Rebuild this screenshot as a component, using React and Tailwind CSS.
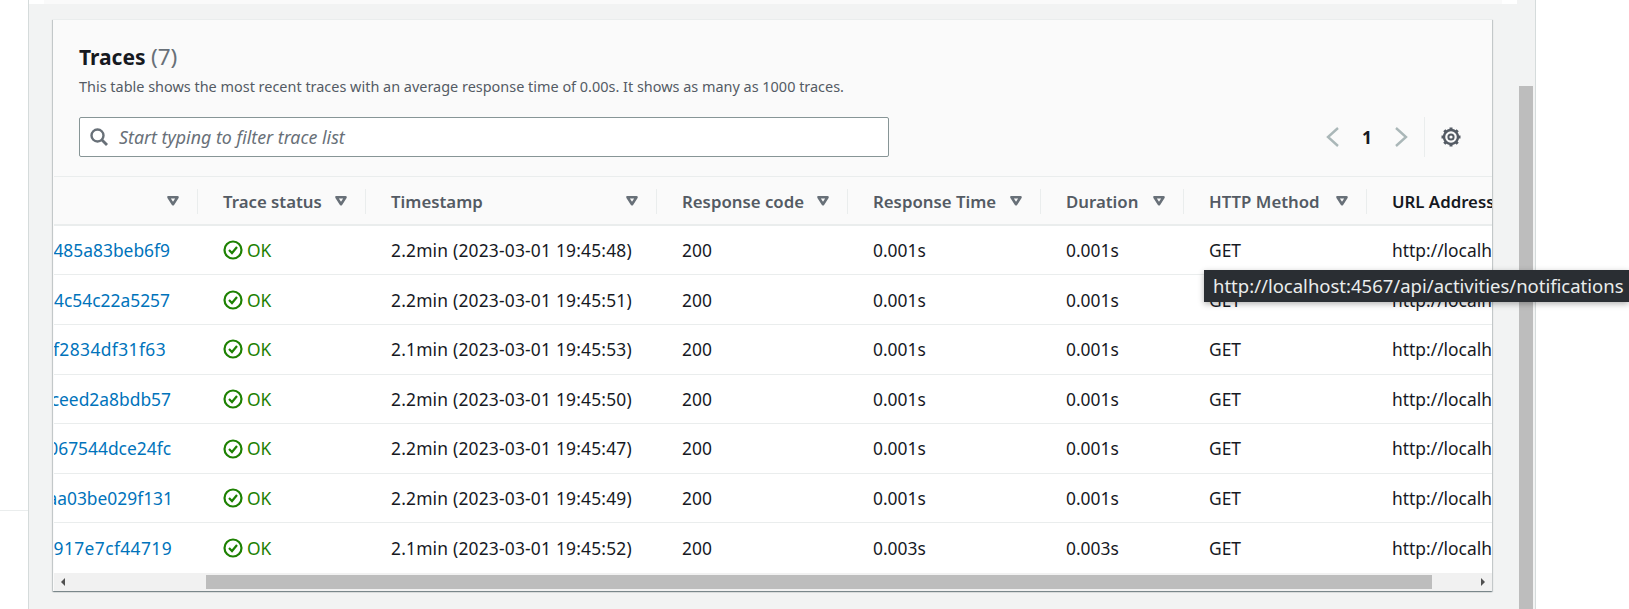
import { Fragment } from 'react';

const COLS = 'grid grid-cols-[144px_168px_291px_191px_193px_143px_183px_125px]';

const HEADERS = [
  { label: '', sort: true },
  { label: 'Trace status', sort: true },
  { label: 'Timestamp', sort: true },
  { label: 'Response code', sort: true },
  { label: 'Response Time', sort: true },
  { label: 'Duration', sort: true },
  { label: 'HTTP Method', sort: true },
];

const ROWS = [
  { id: '701c485a83beb6f9', pad: 'pr-[28px]', age: '2.2min (2023-03-01 19:45:48)', rt: '0.001s' },
  { id: '93a24c54c22a5257', pad: 'pr-[28px]', age: '2.2min (2023-03-01 19:45:51)', rt: '0.001s' },
  { id: 'f2834df31f63', pad: 'pr-[32px] tracking-[0.4px]', age: '2.1min (2023-03-01 19:45:53)', rt: '0.001s' },
  { id: '467cceed2a8bdb57', pad: 'pr-[27px]', age: '2.2min (2023-03-01 19:45:50)', rt: '0.001s' },
  { id: 'c2b9067544dce24fc', pad: 'pr-[27px]', age: '2.2min (2023-03-01 19:45:47)', rt: '0.001s' },
  { id: '284aa03be029f131', pad: 'pr-[25px]', age: '2.2min (2023-03-01 19:45:49)', rt: '0.001s' },
  { id: '917e7cf44719', pad: 'pr-[26px] tracking-[0.4px]', age: '2.1min (2023-03-01 19:45:52)', rt: '0.003s' },
];

function SortIcon() {
  return (
    <svg width="14" height="12" viewBox="0 0 14 12" className="shrink-0">
      <path d="M2.500 2.200h9l-4.500 7z" fill="none" stroke="#687078" strokeWidth="2.600" strokeLinejoin="round" />
    </svg>
  );
}

function OkIcon() {
  return (
    <svg width="20" height="20" viewBox="0 0 20 20" className="shrink-0">
      <circle cx="10" cy="10" r="8.500" fill="none" stroke="#1d8102" strokeWidth="2.200" />
      <path d="M6 10l3 3 5-6" fill="none" stroke="#1d8102" strokeWidth="2.200" />
    </svg>
  );
}

function SearchIcon() {
  return (
    <svg width="18" height="18" viewBox="0 0 18 18" className="shrink-0">
      <circle cx="7.500" cy="7.500" r="6" fill="none" stroke="#687078" strokeWidth="2.400" />
      <path d="M12 12l5 5" fill="none" stroke="#687078" strokeWidth="2.800" />
    </svg>
  );
}

function GearIcon() {
  return (
    <svg width="20" height="20" viewBox="0 0 20 20" className="shrink-0">
      <circle cx="10" cy="10" r="7" fill="none" stroke="#545b64" strokeWidth="2.400" />
      <circle cx="10" cy="10" r="2.600" fill="none" stroke="#545b64" strokeWidth="2" />
      <path
        d="M10 .5v3M10 16.500v3M.5 10h3M16.500 10h3M3.300 3.300l2.100 2.100M14.600 14.600l2.100 2.100M3.300 16.700l2.100-2.100M14.600 5.400l2.100-2.100"
        fill="none"
        stroke="#545b64"
        strokeWidth="3"
      />
    </svg>
  );
}

function ChevronIcon({ right }) {
  return (
    <svg width="14" height="22" viewBox="0 0 14 22">
      <path d={right ? 'M2 2l10 9-10 9' : 'M12 2L2 11l10 9'} fill="none" stroke="#aab7b8" strokeWidth="2.400" />
    </svg>
  );
}

function HeaderCell({ label, sort, first }) {
  return (
    <div className="flex h-full items-center pt-[2px]">
      <div className={`flex h-[25px] w-full items-center justify-between pr-[17px] border-r border-[#eaeded] ${first ? 'pl-0' : 'pl-[25px]'}`}>
        <span className="font-semibold text-[#545b64]">{label}</span>
        {sort && <SortIcon />}
      </div>
    </div>
  );
}

function Row({ row, last }) {
  return (
    <div className={`${COLS} h-[49.600px] items-center ${last ? '' : 'border-b border-[#eaeded]'}`}>
      <div className={`flex justify-end overflow-hidden whitespace-nowrap text-[#0073bb] ${row.pad}`}>{row.id}</div>
      <div className="flex items-center gap-[4px] pl-[25px] text-[#1d8102]">
        <OkIcon />
        OK
      </div>
      <div className="pl-[25px] tracking-[0.2px]">{row.age}</div>
      <div className="pl-[25px]">200</div>
      <div className="pl-[25px]">{row.rt}</div>
      <div className="pl-[25px]">{row.rt}</div>
      <div className="pl-[25px]">GET</div>
      <div className="overflow-hidden whitespace-nowrap pl-[25px]">http://localhost:4567/api</div>
    </div>
  );
}

export default function App() {
  return (
    <div className="relative flex h-[609px] w-[1629px] overflow-hidden bg-white font-['Noto_Sans',sans-serif] text-[17.400px] text-[#16191f]">
      {/* left gutter */}
      <div className="h-full w-[28px] pt-[510px]">
        <div className="border-t border-[#eaeded]" />
      </div>

      <div className="flex h-full w-[1508px] border-x border-[#d5dbdb] bg-[#f2f3f3]">
        <main className="w-[1490px]">
          <div className="h-[4px] w-[1488px] bg-white pl-[15px] pr-[15px]">
            <div className="h-full bg-[#fafafa]" />
          </div>

          {/* traces card */}
          <section className="ml-[24px] mt-[15px] flex h-[572px] w-[1439px] flex-col overflow-hidden border-t border-[#eaeded] bg-[#fafafa] pl-px shadow-[0_1px_1px_0_rgba(0,28,36,0.3),1px_1px_1px_0_rgba(0,28,36,0.15),-1px_1px_1px_0_rgba(0,28,36,0.15)]">
            <div className="h-[157px] border-b border-[#eaeded] pl-[25px] pr-[31px] pt-[22px]">
              <h2 className="text-[21px] leading-[30px] font-bold">
                Traces <span className="text-[22.500px] font-normal text-[#687078]">(7)</span>
              </h2>
              <p className="mt-[5px] text-[14.450px] leading-[20px] text-[#545b64]">
                This table shows the most recent traces with an average response time of 0.00s. It shows as many as 1000 traces.
              </p>
              <div className="mt-[20px] flex items-center justify-between">
                <div className="flex h-[40px] w-[810px] items-center gap-[11px] rounded-[2px] border border-[#879596] bg-white pl-[10px]">
                  <SearchIcon />
                  <span className="text-[17.800px] italic text-[#687078]">Start typing to filter trace list</span>
                </div>
                <div className="flex h-[40px] items-center">
                  <ChevronIcon />
                  <span className="mx-[22px] font-bold">1</span>
                  <ChevronIcon right />
                  <div className="ml-[16px] mr-[16px] h-full border-l border-[#eaeded]" />
                  <GearIcon />
                </div>
              </div>
            </div>

            <div className={`${COLS} h-[49px] border-b-2 border-[#eaeded] text-[16.800px]`}>
              {HEADERS.map((h, i) => (
                <Fragment key={i}>
                  <HeaderCell label={h.label} sort={h.sort} first={i === 0} />
                </Fragment>
              ))}
              <div className="flex items-center overflow-hidden whitespace-nowrap pl-[25px] pt-[2px] font-semibold">URL Address</div>
            </div>

            <div className="flex-1 bg-white">
              {ROWS.map((row, i) => (
                <Row key={row.id} row={row} last={i === ROWS.length - 1} />
              ))}
            </div>

            {/* horizontal scrollbar */}
            <div className="flex h-[18px] items-center bg-[#f1f1f1]">
              <div className="flex w-[18px] justify-center">
                <div className="h-0 w-0 border-y-[4px] border-r-[4px] border-y-transparent border-r-[#505050]" />
              </div>
              <div className="ml-[134px] h-[14px] w-[1226px] bg-[#bdbdbd]" />
              <div className="ml-auto flex w-[18px] justify-center">
                <div className="h-0 w-0 border-y-[4px] border-l-[4px] border-y-transparent border-l-[#505050]" />
              </div>
            </div>
          </section>
        </main>

        {/* page scrollbar */}
        <div className="pt-[86px]">
          <div className="h-[523px] w-[14px] bg-[#bdbdbd]" />
        </div>
      </div>

      {/* tooltip */}
      <div className="absolute left-[1204px] top-[270px] flex h-[32px] w-[425px] items-center whitespace-nowrap bg-[#2a2e33] pb-[1px] pl-[9px] text-[18.500px] text-[#eaeded] shadow-[0_2px_6px_rgba(0,0,0,0.3)]">
        http://localhost:4567/api/activities/notifications
      </div>
    </div>
  );
}
